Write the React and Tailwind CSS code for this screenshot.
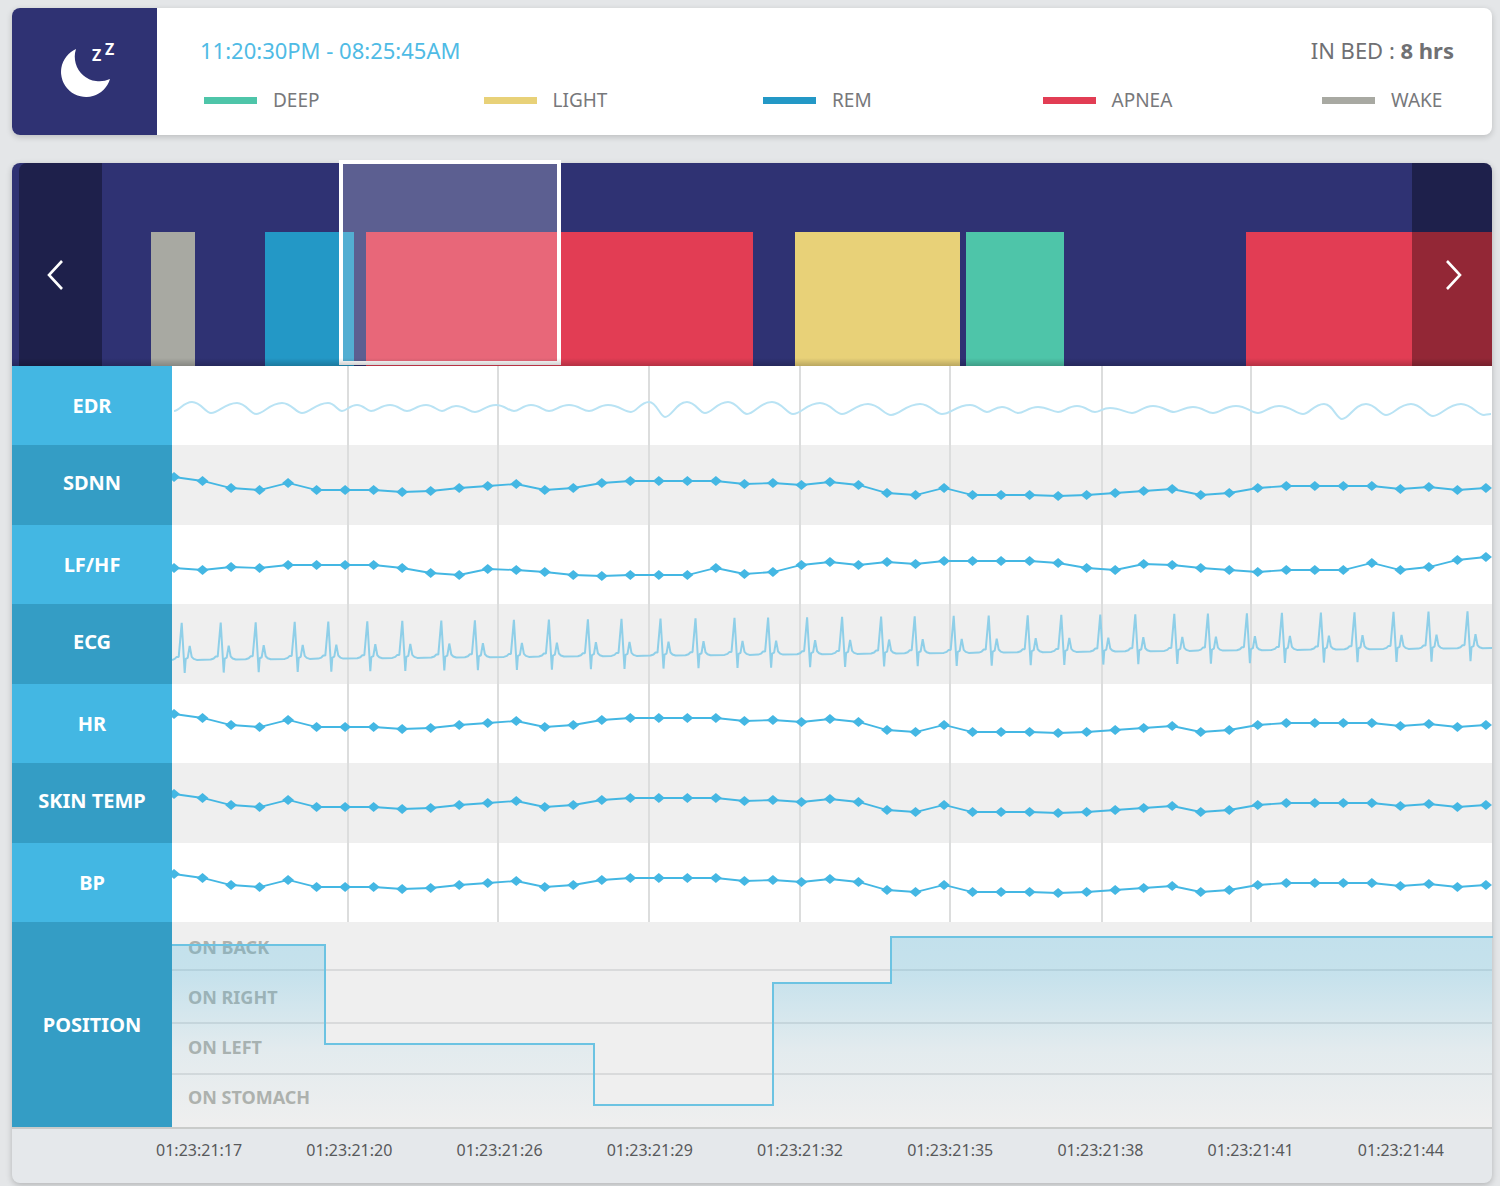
import React, { useState } from "react";

const CHART_WIDTH = 1320;
const GRID_LINES = [176, 326, 477, 628, 778, 930, 1079];

const legend = [
  { label: "DEEP", color: "bg-[#4ec5a9]" },
  { label: "LIGHT", color: "bg-[#e8d178]" },
  { label: "REM", color: "bg-[#2398c6]" },
  { label: "APNEA", color: "bg-[#e23d54]" },
  { label: "WAKE", color: "bg-[#a8a9a2]" },
];

// sleep stages of the night, span is relative to the whole recording
const stages = [
  { span: 139 },
  { span: 44, color: "bg-[#a8a9a2]" },
  { span: 70 },
  { span: 89, color: "bg-[#2398c6]" },
  { span: 12 },
  { span: 387, color: "bg-[#e23d54]" },
  { span: 42 },
  { span: 165, color: "bg-[#e8d178]" },
  { span: 6 },
  { span: 98, color: "bg-[#4ec5a9]" },
  { span: 182 },
  { span: 246, color: "bg-[#e23d54]" },
];

const timestamps = ["17", "20", "26", "29", "32", "35", "38", "41", "44"].map(s => `01:23:21:${s}`);

const positions = ["ON BACK", "ON RIGHT", "ON LEFT", "ON STOMACH"];

const sdnn = [
  32, 36, 43, 45, 38, 45, 45, 45, 47, 46, 43, 41, 39, 45, 43, 38, 36, 36, 36, 36, 39, 38, 40, 37,
  40, 48, 50, 43, 50, 50, 50, 51, 50, 48, 46, 44, 50, 48, 43, 41, 41, 41, 41, 44, 42, 45, 43,
];

const lfhf = [
  43, 45, 42, 43, 40, 40, 40, 40, 43, 48, 50, 44, 45, 47, 50, 51, 50, 50, 50, 43, 49, 47, 40, 37,
  40, 37, 39, 36, 36, 36, 36, 38, 43, 45, 39, 40, 43, 45, 47, 45, 45, 45, 38, 45, 42, 35, 32,
];

// turning points of the respiration curve
const edr = [
  [2, 45], [20, 36], [39, 47], [65, 37], [84, 48], [110, 37], [130, 47], [156, 37], [170, 45],
  [185, 39], [199, 45], [218, 39], [235, 45], [254, 39], [270, 45], [284, 40], [303, 46],
  [324, 39], [342, 45], [359, 39], [377, 45], [397, 39], [417, 45], [436, 39], [459, 46],
  [477, 36], [493, 51], [515, 36], [533, 47], [556, 36], [575, 48], [600, 36], [621, 48],
  [648, 37], [670, 48], [696, 38], [719, 49], [748, 38], [770, 48], [798, 39], [815, 46],
  [830, 41], [846, 47], [866, 41], [886, 46], [905, 40], [923, 46], [938, 42], [960, 47],
  [981, 40], [1002, 46], [1021, 41], [1041, 47], [1064, 40], [1086, 47], [1107, 40], [1131, 48],
  [1152, 38], [1170, 53], [1194, 38], [1214, 49], [1239, 38], [1261, 50], [1289, 38],
  [1312, 49], [1319, 48],
];

const edrPath = edr
  .map(([x, y], i) => {
    if (i === 0) return `M${x} ${y}`;
    const [px, py] = edr[i - 1];
    const w = x - px;
    const rising = y < py;
    const c1 = px + w * (rising ? 0.3 : 0.48);
    const c2 = x - w * (rising ? 0.48 : 0.3);
    return `C${c1} ${py} ${c2} ${y} ${x} ${y}`;
  })
  .join(" ");

const buildEcg = () => {
  const base = x => 56 - (x * 12) / CHART_WIDTH;
  // offsets of one beat: P bump, R spike, S dip, T wave
  const beat = [
    [-10, 0], [-7, -1], [-5, -3], [-3, -3], [0, -37], [3, 13], [4, -1], [6, -2], [8, -14],
    [10, -3], [12, -1], [15, 0],
  ];
  let d = `M0 ${base(0)}`;
  for (let group = 0; group < 9; group++) {
    for (const offset of [0, 39, 74, 113]) {
      const x = 9.7 + group * 146.6 + offset;
      beat.forEach(([dx, dy]) => {
        if (x + dx > 0) d += ` L${x + dx} ${base(x) + dy}`;
      });
    }
  }
  return `${d} L${CHART_WIDTH} ${base(CHART_WIDTH)}`;
};

const ecgPath = buildEcg();

const DotSeries = ({ values, shift = 0 }) => {
  const points = values.map((v, i) => [2 + i * 28.52, v + shift]);
  return (
    <g>
      <polyline
        points={points.map(p => p.join(",")).join(" ")}
        fill="none"
        stroke="#44b7e3"
        strokeWidth="1.8"
      />
      {points.map(([x, y]) => (
        <path
          key={x}
          d={`M${x - 6} ${y} L${x} ${y - 5} L${x + 6} ${y} L${x} ${y + 5} Z`}
          fill="#44b7e3"
        />
      ))}
    </g>
  );
};

const signals = [
  { name: "EDR", chart: <path d={edrPath} fill="none" stroke="#b9e3f4" strokeWidth="2" /> },
  { name: "SDNN", chart: <DotSeries values={sdnn} /> },
  { name: "LF/HF", chart: <DotSeries values={lfhf} /> },
  {
    name: "ECG",
    chart: (
      <path d={ecgPath} fill="none" stroke="#8fcfe8" strokeWidth="2" strokeLinejoin="bevel" />
    ),
  },
  { name: "HR", chart: <DotSeries values={sdnn} shift={-2} /> },
  { name: "SKIN TEMP", chart: <DotSeries values={sdnn} shift={-1} /> },
  { name: "BP", chart: <DotSeries values={sdnn} shift={-1} /> },
];

const SleepIcon = () => (
  <svg width="76" height="76" viewBox="-8 -8 76 76" fill="#fff" aria-hidden="true">
    <path d="M21 7 A24.7 24.7 0 0 0 55 37 A25 25 0 1 1 21 7 Z" />
    <text x="37" y="19" fontSize="16" fontWeight="700">Z</text>
    <text x="50" y="13" fontSize="16" fontWeight="700">Z</text>
  </svg>
);

const Chevron = ({ d }) => (
  <svg width="18" height="30" viewBox="0 0 18 30" fill="none" stroke="#fff" strokeWidth="2.6" aria-hidden="true">
    <path d={d} />
  </svg>
);

const SummaryCard = () => (
  <header className="flex rounded-lg bg-white shadow-[0_2px_6px_rgba(0,0,0,0.18)]">
    <div className="flex w-[145px] shrink-0 items-center justify-center rounded-l-lg bg-[#2f3273]">
      <SleepIcon />
    </div>
    <div className="flex-1 pt-[26px] pr-[38px] pb-[19px] pl-[43px]">
      <div className="flex items-center justify-between leading-8">
        <h1 className="text-[22px] text-[#4fbbe5]">11:20:30PM - 08:25:45AM</h1>
        <p className="text-[22px] text-[#6f7073]">
          IN BED : <b>8 hrs</b>
        </p>
      </div>
      <ul className="mt-[18px] mr-[10px] ml-1 flex justify-between">
        {legend.map(item => (
          <li key={item.label} className="flex w-[122px] items-center gap-4 whitespace-nowrap">
            <span className={`h-[7px] w-[53px] shrink-0 ${item.color}`} />
            <span className="text-[19px] leading-8 text-[#77787b]">{item.label}</span>
          </li>
        ))}
      </ul>
    </div>
  </header>
);

const Timeline = () => {
  const [start, setStart] = useState(22.1);

  const move = step => setStart(s => Math.min(85, Math.max(0, s + step)));

  return (
    <div className="relative">
      <div className="flex h-[203px] items-end overflow-hidden rounded-t-lg bg-[#2f3273]">
        {stages.map((stage, i) => (
          <div
            key={i}
            className={`h-[134px] basis-0 ${stage.color || ""}`}
            style={{ flexGrow: stage.span }}
          />
        ))}
      </div>

      <button
        type="button"
        aria-label="Earlier"
        onClick={() => move(-5)}
        className="absolute inset-y-0 left-[7px] flex w-[83px] items-center justify-center rounded-tl-lg bg-black/35 pt-5 pr-3"
      >
        <Chevron d="M16 1 L3 15 L16 29" />
      </button>
      <button
        type="button"
        aria-label="Later"
        onClick={() => move(5)}
        className="absolute inset-y-0 right-0 flex w-20 items-center justify-center rounded-tr-lg bg-black/35 pt-5 pl-1"
      >
        <Chevron d="M2 1 L15 15 L2 29" />
      </button>

      {/* visible window */}
      <div
        className="absolute -top-[3px] bottom-px border-4 border-white bg-white/22"
        style={{ left: `${start}%`, width: "15%" }}
      />
      <div className="pointer-events-none absolute inset-x-0 bottom-0 h-2 bg-linear-to-b from-transparent to-black/20" />
    </div>
  );
};

const SignalRow = ({ name, striped, children }) => (
  <div className={`flex ${striped ? "h-20" : "h-[79px]"}`}>
    <h2
      className={`flex w-40 shrink-0 items-center justify-center text-[20px] font-bold text-white ${
        striped ? "bg-[#349dc5] pb-1" : "bg-[#43b7e3]"
      }`}
    >
      {name}
    </h2>
    <svg
      className={`h-full min-w-0 flex-1 ${striped ? "bg-[#efefef]" : "bg-white"}`}
      viewBox={`0 0 ${CHART_WIDTH} ${striped ? 80 : 79}`}
      preserveAspectRatio="none"
      role="img"
      aria-label={name}
    >
      {GRID_LINES.map(x => (
        <line key={x} x1={x} x2={x} y1="0" y2="80" stroke="#dcdddd" strokeWidth="2" />
      ))}
      {children}
    </svg>
  </div>
);

const PositionRow = () => (
  <div className="flex">
    <h2 className="flex w-40 shrink-0 items-center justify-center bg-[#349dc5] text-[20px] font-bold text-white">
      POSITION
    </h2>
    <div className="grid min-w-0 flex-1 bg-[#efefef]">
      <ul className="col-start-1 row-start-1 grid grid-rows-4 pb-1 pl-4 text-[18px] font-bold text-[#b0b1ac]">
        {positions.map(p => (
          <li key={p} className="flex items-center">{p}</li>
        ))}
      </ul>
      <svg
        className="col-start-1 row-start-1 h-[205px] w-full overflow-visible"
        viewBox="0 0 1320 205"
        preserveAspectRatio="none"
        role="img"
        aria-label="Body position"
      >
        <defs>
          <linearGradient id="positionFill" gradientUnits="userSpaceOnUse" x1="0" y1="15" x2="0" y2="205">
            <stop offset="0" stopColor="#44b7e3" stopOpacity="0.26" />
            <stop offset="0.2" stopColor="#44b7e3" stopOpacity="0.24" />
            <stop offset="0.6" stopColor="#44b7e3" stopOpacity="0.07" />
            <stop offset="1" stopColor="#44b7e3" stopOpacity="0" />
          </linearGradient>
        </defs>
        {[48, 101, 152].map(y => (
          <line key={y} x1="0" x2="1320" y1={y} y2={y} stroke="#d9dadb" strokeWidth="2" />
        ))}
        <path
          d="M0 23 H153 V122 H422 V183 H601 V61 H719 V15 H1320 V205 H0 Z"
          fill="url(#positionFill)"
        />
        <path
          d="M0 23 H153 V122 H422 V183 H601 V61 H719 V15 H1321"
          fill="none"
          stroke="#6cc3e2"
          strokeWidth="2"
        />
      </svg>
    </div>
  </div>
);

const App = () => {
  return (
    <main className="min-h-screen bg-[#e4e6e8] pt-2 pr-2 pb-[3px] pl-3 font-['Noto_Sans',sans-serif]">
      <SummaryCard />

      <section className="mt-7 rounded-lg bg-[#e5e8eb] shadow-[0_2px_6px_rgba(0,0,0,0.22)]">
        <Timeline />

        {signals.map((signal, i) => (
          <SignalRow key={signal.name} name={signal.name} striped={i % 2 === 1}>
            {signal.chart}
          </SignalRow>
        ))}
        <PositionRow />

        <ol className="grid grid-cols-9 border-t-2 border-[#c9cbca] pt-[9px] pr-4 pb-[21px] pl-28 text-center text-[16px] leading-6 text-[#58595b]">
          {timestamps.map(t => (
            <li key={t}>{t}</li>
          ))}
        </ol>
      </section>
    </main>
  );
};

export default App;
